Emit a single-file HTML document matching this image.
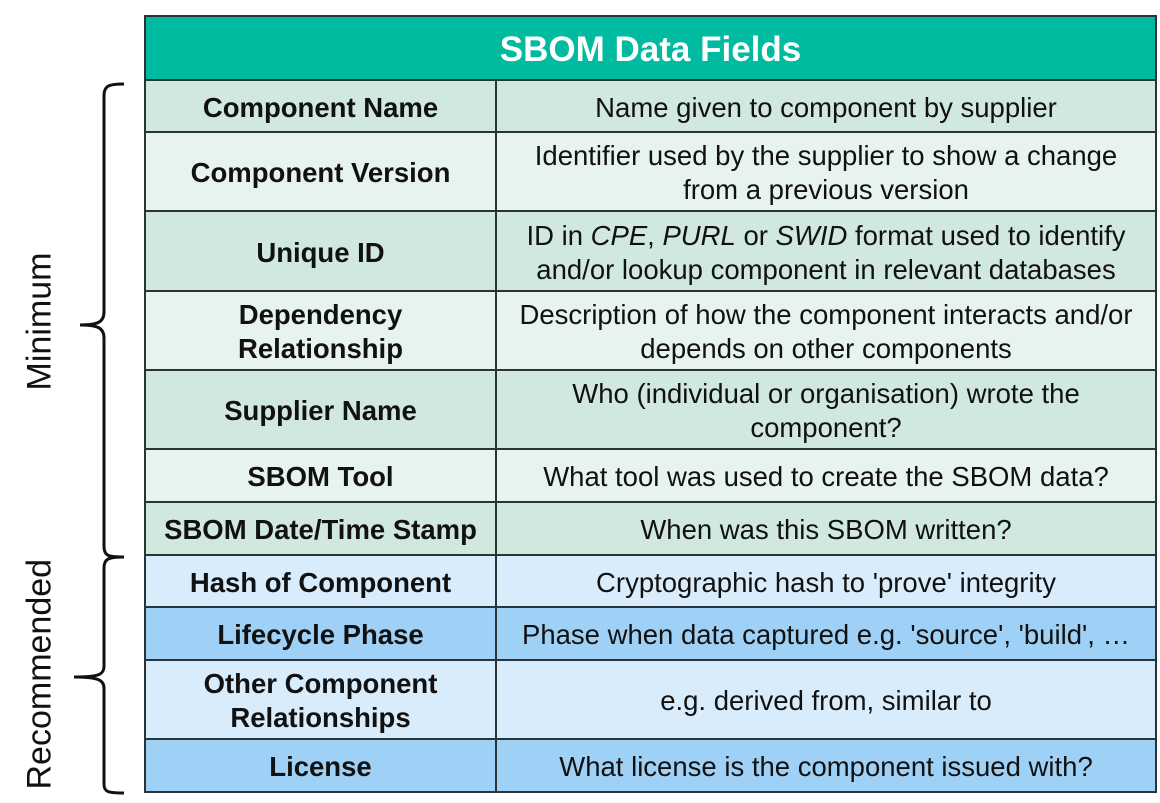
<!DOCTYPE html>
<html><head><style>
body{margin:0;width:1160px;height:803px;background:#fff;position:relative;overflow:hidden;font-family:"Liberation Sans",Arial,sans-serif;}
table{position:absolute;left:144px;top:15px;width:1011px;border-collapse:collapse;table-layout:fixed;}
td{border:2px solid #2a3338;text-align:center;font-size:27.5px;line-height:34px;color:#111;padding:3px 4px 0 4px;overflow:hidden;white-space:nowrap;}
td.k{font-weight:bold;}
.h{background:#00bba0;color:#fff;font-weight:bold;font-size:35px;height:59px;}
.g1 td{background:#d0e8de}.g2 td{background:#e6f3ee}
.b1 td{background:#d8ecfb}.b2 td{background:#9fd1f6}
.lbl{position:absolute;font-size:34px;color:#111;transform:rotate(-90deg);transform-origin:center;white-space:nowrap;}
</style></head><body>
<svg style="position:absolute;left:0;top:0" width="140" height="803">
<path d="M124 84 C108 84 104 86 104 96 L104 312 C104 322 98 325 80 325 C98 325 104 328 104 338 L104 546 C104 556 108 557 124 557" fill="none" stroke="#111" stroke-width="3"/>
<path d="M124 557 C108 557 104 559 104 568 L104 666 C104 675 98 677 74 677 C98 677 104 680 104 688 L104 784 C104 792 108 793 124 793" fill="none" stroke="#111" stroke-width="3"/>
</svg>
<div class="lbl" style="left:-30px;top:302px;width:140px;text-align:center">Minimum</div>
<div class="lbl" style="left:-60px;top:670px;width:200px;text-align:center">Recommended</div>
<table>
<colgroup><col style="width:351px"><col style="width:660px"></colgroup>
<tr><td colspan="2" class="h">SBOM Data Fields</td></tr>
<tr class="g1" style="height:52px"><td class="k">Component Name</td><td>Name given to component by supplier</td></tr>
<tr class="g2" style="height:79px"><td class="k">Component Version</td><td>Identifier used by the supplier to show a change<br>from a previous version</td></tr>
<tr class="g1" style="height:80px"><td class="k">Unique ID</td><td>ID in <i>CPE</i>, <i>PURL</i> or <i>SWID</i> format used to identify<br>and/or lookup component in relevant databases</td></tr>
<tr class="g2" style="height:79px"><td class="k">Dependency<br>Relationship</td><td>Description of how the component interacts and/or<br>depends on other components</td></tr>
<tr class="g1" style="height:79px"><td class="k">Supplier Name</td><td>Who (individual or organisation) wrote the<br>component?</td></tr>
<tr class="g2" style="height:53px"><td class="k">SBOM Tool</td><td>What tool was used to create the SBOM data?</td></tr>
<tr class="g1" style="height:53px"><td class="k">SBOM Date/Time Stamp</td><td>When was this SBOM written?</td></tr>
<tr class="b1" style="height:52px"><td class="k">Hash of Component</td><td>Cryptographic hash to 'prove' integrity</td></tr>
<tr class="b2" style="height:53px"><td class="k">Lifecycle Phase</td><td>Phase when data captured e.g. 'source', 'build', …</td></tr>
<tr class="b1" style="height:79px"><td class="k">Other Component<br>Relationships</td><td>e.g. derived from, similar to</td></tr>
<tr class="b2" style="height:53px"><td class="k">License</td><td>What license is the component issued with?</td></tr>
</table>
</body></html>
